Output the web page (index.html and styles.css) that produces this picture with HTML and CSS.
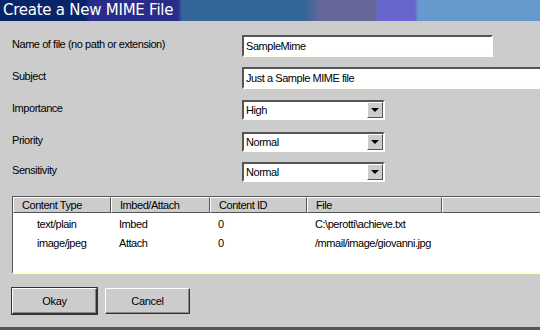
FILE: index.html
```html
<!DOCTYPE html>
<html lang="en">
<head>
    <meta charset="UTF-8">
    <title>Create a New MIME File</title>
    <link rel="stylesheet" href="styles.css">
</head>
<body>
    <div class="dialog">
        <div class="titlebar">Create a New MIME File</div>

        <div class="fields">
            <div class="row">
                <label>Name of file (no path or extension)</label>
                <div class="textbox name">SampleMime</div>
            </div>
            <div class="row">
                <label>Subject</label>
                <div class="textbox subject">Just a Sample MIME file</div>
            </div>
            <div class="row">
                <label>Importance</label>
                <div class="combo"><span>High</span><i class="arrow"></i></div>
            </div>
            <div class="row">
                <label>Priority</label>
                <div class="combo"><span>Normal</span><i class="arrow"></i></div>
            </div>
            <div class="row tight">
                <label>Sensitivity</label>
                <div class="combo"><span>Normal</span><i class="arrow"></i></div>
            </div>
        </div>

        <div class="list">
            <div class="list-head">
                <div class="col c1">Content Type</div>
                <div class="col c2">Imbed/Attach</div>
                <div class="col c3">Content ID</div>
                <div class="col c4">File</div>
                <div class="col c5"></div>
            </div>
            <div class="list-row">
                <div class="cell c1 indent">text/plain</div>
                <div class="cell c2">Imbed</div>
                <div class="cell c3">0</div>
                <div class="cell c4">C:\perotti\achieve.txt</div>
            </div>
            <div class="list-row">
                <div class="cell c1 indent">image/jpeg</div>
                <div class="cell c2">Attach</div>
                <div class="cell c3">0</div>
                <div class="cell c4">/mmail/image/giovanni.jpg</div>
            </div>
        </div>

        <div class="buttons">
            <button class="btn default">Okay</button>
            <button class="btn">Cancel</button>
        </div>
    </div>
</body>
</html>
```

FILE: styles.css
```css
* {
    margin: 0;
    padding: 0;
    box-sizing: border-box;
    font-family: 'Liberation Sans', Arial, sans-serif;
}

body, html {
    width: 540px;
    height: 330px;
    overflow: hidden;
    background-color: #cccccc;
}

.dialog {
    height: 330px;
    border-bottom: 3px solid #555555;
    display: flex;
    flex-direction: column;
    font-size: 11px;
    letter-spacing: -0.45px;
}

.titlebar {
    height: 21px;
    padding-left: 3px;
    line-height: 21px;
    color: white;
    font-family: 'DejaVu Sans', sans-serif;
    font-size: 15px;
    letter-spacing: -0.25px;
    background: linear-gradient(to right,
        #0a246a 0, #0a246a 85px,
        #2a2c8a 90px, #2a2c8a 178px,
        #336699 182px, #336699 305px,
        #666699 320px, #666699 375px,
        #6666cc 378px, #6666cc 415px,
        #6699cc 418px, #6699cc 100%);
}

.fields {
    display: flex;
    flex-direction: column;
    gap: 10px;
    padding: 14px 0 0 12px;
}

.row {
    display: flex;
    align-items: center;
    height: 22px;
}

.row.tight {
    margin-top: -2px;
}

.row label {
    flex-shrink: 0;
    width: 230px;
    padding-bottom: 4px;
}

.textbox {
    flex-shrink: 0;
    height: 22px;
    background: white;
    border: 2px solid;
    border-color: #555555 #ffffff #fffff0 #555555;
    line-height: 18px;
    padding-left: 2px;
}

.textbox.name {
    width: 251px;
}

.textbox.subject {
    width: 310px;
}

.combo {
    flex-shrink: 0;
    width: 143px;
    height: 20px;
    background: white;
    border: 2px solid;
    border-color: #555555 #ffffff #ffffff #555555;
    display: flex;
    align-items: stretch;
}

.combo span {
    flex: 1;
    line-height: 16px;
    padding-left: 2px;
}

.arrow {
    width: 16px;
    background: #cccccc;
    border: 1px solid;
    border-color: #ffffff #555555 #555555 #ffffff;
    display: flex;
    align-items: center;
    justify-content: center;
}

.arrow::after {
    content: '';
    border-left: 4px solid transparent;
    border-right: 4px solid transparent;
    border-top: 4px solid #000;
}

.list {
    margin: 13px 0 0 12px;
    height: 78px;
    width: 540px;
    flex-shrink: 0;
    background: white;
    border-left: 1px solid #555555;
    border-top: 1px solid #555555;
    border-bottom: 2px solid #ffffcc;
}

.list-head {
    display: flex;
    height: 16px;
}

.col {
    background: #cccccc;
    border: 1px solid;
    border-color: #ffffff #555555 #555555 #ffffff;
    line-height: 14px;
    padding-left: 8px;
}

.list-row {
    display: flex;
    height: 19px;
    line-height: 19px;
}

.list-head + .list-row {
    margin-top: 2px;
}

.cell {
    padding-left: 8px;
}

.cell.indent {
    padding-left: 24px;
}

.c1 { width: 98px; }
.c2 { width: 99px; }
.c3 { width: 97px; }
.c4 { width: 135px; }
.c5 { flex: 1; }

.buttons {
    display: flex;
    gap: 8px;
    margin: 14px 0 0 12px;
}

.btn {
    width: 85px;
    height: 26px;
    background: #cccccc;
    border: 1px solid;
    border-color: #ffffff #333333 #333333 #ffffff;
    font-size: 11px;
    letter-spacing: -0.3px;
    box-shadow: inset -1px -1px 0 #888888;
}

.btn.default {
    outline: 1px solid #333333;
}
```
